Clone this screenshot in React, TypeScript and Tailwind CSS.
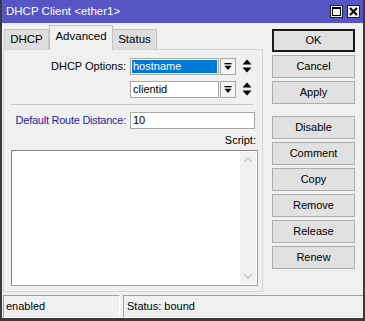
import React from "react";

function DropBtn() {
  return (
    <div className="w-[16px] h-[17px] border border-[#a8a8a8] bg-[#f4f4f4] flex items-center justify-center">
      <svg width="8" height="8" viewBox="0 0 8 8">
        <rect x="0.5" y="0" width="7" height="1.3" fill="#000" />
        <polygon points="0.5,2.8 7.5,2.8 4,7" fill="#000" />
      </svg>
    </div>
  );
}

function UpDown() {
  return (
    <svg width="10" height="15" viewBox="0 0 10 15">
      <polygon points="5,0.5 9.5,5.5 0.5,5.5" fill="#000" />
      <polygon points="0.5,8.5 9.5,8.5 5,13.5" fill="#000" />
    </svg>
  );
}

function Btn({ label, primary }: { label: string; primary?: boolean }) {
  return (
    <div
      className={
        "h-[23px] w-[83px] flex items-center justify-center bg-[#e1e1e1] text-[11px] text-black " +
        (primary ? "border-2 border-[#1a1a1a]" : "border border-[#adadad]")
      }
    >
      {label}
    </div>
  );
}

export default function App() {
  return (
    <div className="w-[365px] h-[321px] bg-[#f0f0f0] border-x-2 border-b-[3px] border-[#3a3a3a] flex flex-col font-['Liberation_Sans',Arial,sans-serif] text-[11px] text-black leading-none select-none">
      {/* Title bar */}
      <div className="h-[23px] bg-[#5555c6] flex items-center pl-[4px] pr-[3px]">
        <span className="text-white text-[11.5px]">DHCP Client &lt;ether1&gt;</span>
        <div className="ml-auto flex gap-[4px]">
          <div className="w-[13px] h-[13px] bg-[#f0f0f0] border border-[#222] flex items-center justify-center">
            <svg width="9" height="9" viewBox="0 0 9 9">
              <rect x="0.5" y="0.5" width="8" height="8" fill="none" stroke="#000" strokeWidth="1" />
              <rect x="0.5" y="0.5" width="8" height="1.5" fill="#000" />
            </svg>
          </div>
          <div className="w-[13px] h-[13px] bg-[#f0f0f0] border border-[#222] flex items-center justify-center">
            <svg width="9" height="9" viewBox="0 0 9 9">
              <path d="M1 1 L8 8 M8 1 L1 8" stroke="#000" strokeWidth="2" />
            </svg>
          </div>
        </div>
      </div>

      {/* Main */}
      <div className="flex-1 flex min-h-0">
        {/* Left column */}
        <div className="ml-[1px] w-[260px] flex flex-col">
          {/* Tabs */}
          <div className="h-[27px] pt-[2px] flex items-end pl-[1px] relative z-10">
            <div className="h-[20px] w-[45px] bg-[#dedede] border border-b-0 border-[#c4c4c4] flex items-center justify-center text-[11.5px] mb-[1px]">
              DHCP
            </div>
            <div className="h-[25px] w-[64px] bg-[#f0f0f0] border border-b-0 border-[#c4c4c4] flex items-center justify-center pb-[3px] text-[11.5px]">
              Advanced
            </div>
            <div className="h-[20px] w-[44px] bg-[#dedede] border border-b-0 border-l-0 border-[#c4c4c4] flex items-center justify-center text-[11.5px] mb-[1px]">
              Status
            </div>
          </div>
          {/* Panel */}
          <div className="-mt-[1px] h-[243px] border border-[#d4d4d4] pl-[7px] pr-[4px] pt-[8px] flex flex-col">
            <div className="flex items-center h-[17px]">
              <div className="w-[115px] text-right whitespace-nowrap">DHCP Options:</div>
              <div className="ml-[4px] w-[89px] h-[17px] border border-[#a8a8a8] bg-white p-[1px]">
                <div className="h-full bg-[#0078d7] text-white flex items-center pl-[1px]">hostname</div>
              </div>
              <div className="ml-[1px]">
                <DropBtn />
              </div>
              <div className="ml-[6px] flex items-center">
                <UpDown />
              </div>
            </div>
            <div className="flex items-center h-[17px] mt-[6px]">
              <div className="w-[115px]" />
              <div className="ml-[4px] w-[89px] h-[17px] border border-[#a8a8a8] bg-white flex items-center pl-[2px]">
                clientid
              </div>
              <div className="ml-[1px]">
                <DropBtn />
              </div>
              <div className="ml-[6px] flex items-center">
                <UpDown />
              </div>
            </div>
            <div className="mt-[6px] mr-[5px] h-0 border-t border-[#c8c8c8]" />
            <div className="flex items-center h-[17px] mt-[7px]">
              <div className="w-[115px] flex justify-end whitespace-nowrap tracking-[-0.25px] text-[#1f1fa6]">
                Default Route Distance:
              </div>
              <div className="ml-[4px] w-[125px] h-[17px] border border-[#a8a8a8] bg-white flex items-center pl-[2px]">
                10
              </div>
            </div>
            <div className="mt-[6px] h-[12px] flex justify-end pr-[2px]">Script:</div>
            <div className="mt-[3px] w-[247px] h-[136px] bg-white border border-[#a0a0a0] border-t-[#828282] border-l-[#828282] flex">
              <div className="flex-1" />
              <div className="w-[16px] my-[1px] mr-[1px] bg-[#f0f0f0] flex flex-col items-center justify-between py-[5px]">
                <svg width="8" height="5" viewBox="0 0 8 5">
                  <path d="M0.5 4.5 L4 1 L7.5 4.5" fill="none" stroke="#c2c2c2" strokeWidth="1.2" />
                </svg>
                <svg width="8" height="5" viewBox="0 0 8 5">
                  <path d="M0.5 0.5 L4 4 L7.5 0.5" fill="none" stroke="#c2c2c2" strokeWidth="1.2" />
                </svg>
              </div>
            </div>
          </div>
        </div>
        {/* Buttons */}
        <div className="ml-[9px] pt-[6px] flex flex-col gap-[3px]">
          <Btn label="OK" primary />
          <Btn label="Cancel" />
          <Btn label="Apply" />
          <div className="h-[6px]" />
          <Btn label="Disable" />
          <Btn label="Comment" />
          <Btn label="Copy" />
          <Btn label="Remove" />
          <Btn label="Release" />
          <Btn label="Renew" />
        </div>
      </div>

      {/* Status bar */}
      <div className="h-[24px] flex pl-[1px] pt-[1px] gap-[3px]">
        <div className="w-[117px] h-full border border-[#a0a0a0] border-b-white border-r-white flex items-center pl-[2px]">
          enabled
        </div>
        <div className="flex-1 h-full border border-[#a0a0a0] border-b-white border-r-0 flex items-center pl-[3px]">
          Status: bound
        </div>
      </div>
    </div>
  );
}
